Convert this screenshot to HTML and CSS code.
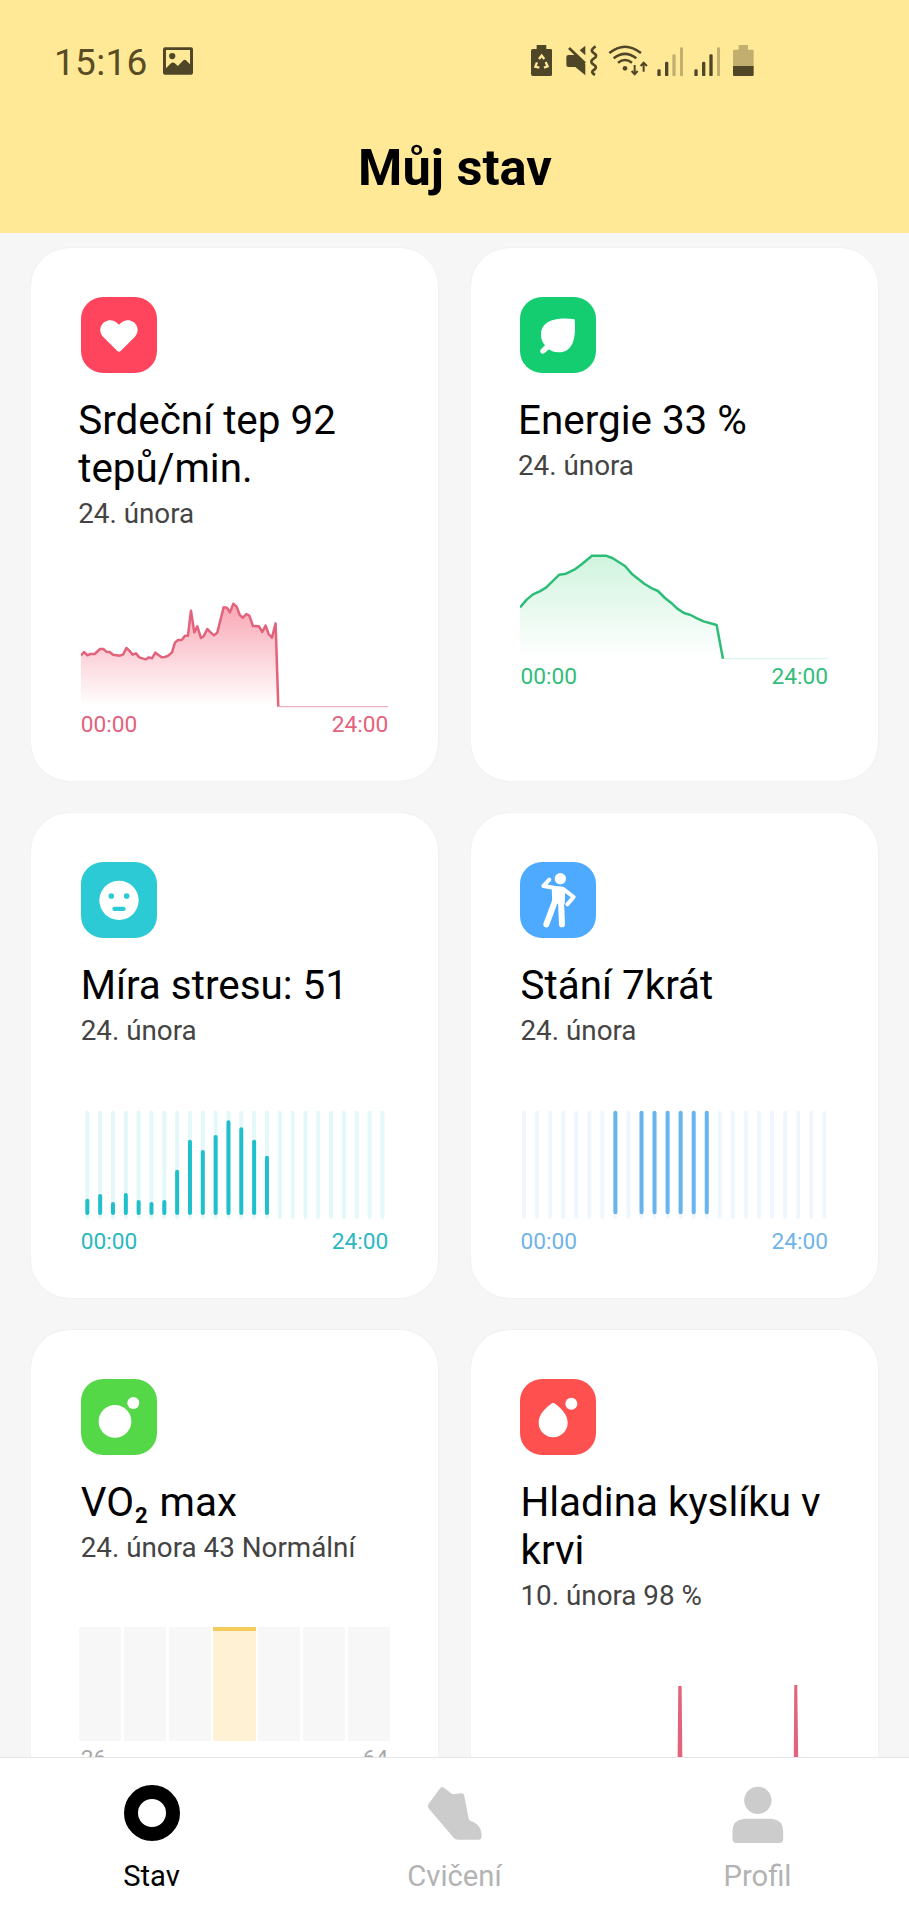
FILE: index.html
```html
<!DOCTYPE html>
<html lang="cs">
<head>
<meta charset="utf-8">
<title>Můj stav</title>
<link rel="stylesheet" href="styles.css">
</head>
<body>
<div class="app">
  <header class="header">
    <div class="status">
      <span class="clock">15:16</span>
      <svg class="st-image" viewBox="488 141 91 84"><path fill-rule="evenodd" d="M494 141h79q6 0 6 6v72q0 6-6 6h-79q-6 0-6-6v-72q0-6 6-6zM497 150v55l15-15q6-5 12 0l9 8 17-17q4-4 8 0l12 12v-43z"/><circle cx="516" cy="168" r="9.500"/></svg>
      <div class="status-right">
        <svg class="st-saver" viewBox="242 135 64 93"><path d="M259 135h29v12h12q6 0 6 6v69q0 6-6 6h-52q-6 0-6-6v-69q0-6 6-6h11z"/><g class="recycle"><path d="M266 177l8-10 8 10M286 186l6 13-11 4M267 203l-12-3 5-13"/></g></svg>
        <svg class="st-mute" viewBox="350 135 94 93"><path d="M357 165h21l30 27v34l-30-25h-21q-6 0-6-6v-24q0-6 6-6zM391 151l17-14v29z"/><path class="line" d="M359 144l48 46" stroke-width="8"/><path class="line" d="M439 139q-18 11-7 19 16 10 1 18-14 9 0 18 14 8-1 17-8 6 5 14" stroke-width="8"/></svg>
        <svg class="st-wifi" viewBox="476 135 121 93"><path class="line" d="M480 159q47-38 95 0M493 175q34-27 68 0M506 188q21-16 42 0" stroke-width="7.500"/><circle cx="527" cy="205" r="7"/><path class="line" d="M556 195v27M547 213l9 10 9-10M583 215v-26M574 198l9-10 10 10" stroke-width="6"/></svg>
        <svg class="st-signal" viewBox="620 140 80 88"><g><rect x="621" y="207" width="10" height="21" rx="4"/><rect x="644" y="184" width="10" height="44" rx="4"/><rect class="dim" x="666" y="162" width="10" height="66" rx="4"/><rect class="dim" x="689" y="141" width="10" height="87" rx="4"/></g></svg>
        <svg class="st-signal second" viewBox="620 140 80 88"><rect x="621" y="207" width="10" height="21" rx="4"/><rect x="644" y="184" width="10" height="44" rx="4"/><rect x="666" y="162" width="10" height="66" rx="4"/><rect class="dim" x="689" y="141" width="10" height="87" rx="4"/></svg>
        <svg class="st-battery" viewBox="849 135 62 93"><path class="dim" d="M866 135h28v14h13q4 0 4 4v45h-62v-45q0-4 4-4h13z"/><path d="M849 198h62v26q0 4-4 4h-54q-4 0-4-4z"/></svg>
      </div>
    </div>
    <h1 class="page-title">Můj stav</h1>
  </header>

  <main class="cards">
    <article class="card shifted">
      <svg class="icon" viewBox="182 171 228 228"><rect class="bg-red" x="182" y="171" width="228" height="228" rx="66"/><path fill="#fff" d="M291 333L248 290C222 259 265 219 296 254C327 219 370 259 344 290L301 333Q296 338 291 333z"/></svg>
      <h2 class="card-title">Srdeční tep 92 tepů/min.</h2>
      <p class="card-sub">24. února</p>
      <svg class="chart" viewBox="183 189 923 351">
        <defs><linearGradient id="g-heart" x1="0" y1="220" x2="0" y2="530" gradientUnits="userSpaceOnUse"><stop offset="0" stop-color="#f9a6b4"/><stop offset="1" stop-color="#fff"/></linearGradient></defs>
        <path fill="url(#g-heart)" d="M183 376L192 366L202 376L211 372L224 372L240 357L250 357L259 365L269 366L279 374L300 377L310 373L319 354L329 363L338 374L348 370L358 382L377 388L387 382L396 385L406 368L425 382L435 381L445 377L456 367L465 338L474 330L485 330L495 317L504 317L513 242L523 307L532 289L543 324L552 317L562 297L572 307L582 316L592 308L611 232L621 233L630 247L640 221L650 230L660 256L669 263L679 252L688 257L699 288L717 289L727 306L737 287L746 312L756 323L767 280L775 530L183 530z"/>
        <path class="baseline heart-base" d="M778 530H1106"/>
        <path class="series heart-line" d="M183 376L192 366L202 376L211 372L224 372L240 357L250 357L259 365L269 366L279 374L300 377L310 373L319 354L329 363L338 374L348 370L358 382L377 388L387 382L396 385L406 368L425 382L435 381L445 377L456 367L465 338L474 330L485 330L495 317L504 317L513 242L523 307L532 289L543 324L552 317L562 297L572 307L582 316L592 308L611 232L621 233L630 247L640 221L650 230L660 256L669 263L679 252L688 257L699 288L717 289L727 306L737 287L746 312L756 323L767 280L775 530"/>
      </svg>
      <div class="axis red"><span>00:00</span><span>24:00</span></div>
    </article>

    <article class="card shifted">
      <svg class="icon" viewBox="180 171 228 228"><rect class="bg-green" x="180" y="171" width="228" height="228" rx="66"/><path fill="#fff" d="M341 237q3 0 3 3c5 56-6 97-48 97-13 0-22-4-29-9l-13 11c-8 7-18-4-11-11l12-12c-8-10-12-20-12-32 0-42 44-53 98-47z"/></svg>
      <h2 class="card-title">Energie 33 %</h2>
      <p class="card-sub">24. února</p>
      <svg class="chart" viewBox="180 45 923 351">
        <defs><linearGradient id="g-energy" x1="0" y1="76" x2="0" y2="386" gradientUnits="userSpaceOnUse"><stop offset="0" stop-color="#d0f4de"/><stop offset="1" stop-color="#fff"/></linearGradient></defs>
        <path fill="url(#g-energy)" d="M180 232L200 209L219 193L239 184L258 173L298 134L318 131L343 119L366 102L396 77L437 77L457 84L495 108L515 131L554 162L576 175L594 183L615 204L633 218L652 236L672 249L692 255L711 265L731 274L770 285L789 386H180z"/>
        <path class="baseline energy-base" d="M791 386H1103"/>
        <path class="series energy-line" d="M180 232L200 209L219 193L239 184L258 173L298 134L318 131L343 119L366 102L396 77L437 77L457 84L495 108L515 131L554 162L576 175L594 183L615 204L633 218L652 236L672 249L692 255L711 265L731 274L770 285L789 386"/>
      </svg>
      <div class="axis green"><span>00:00</span><span>24:00</span></div>
    </article>

    <article class="card">
      <svg class="icon" viewBox="182 186 228 228"><rect class="bg-teal" x="182" y="186" width="228" height="228" rx="66"/><circle cx="296" cy="301" r="59" fill="#fff"/><g class="bg-teal"><circle cx="273" cy="288" r="8.500"/><circle cx="319" cy="288" r="8.500"/><rect x="276" y="320" width="40" height="13" rx="6.500"/></g></svg>
      <h2 class="card-title">Míra stresu: 51</h2>
      <p class="card-sub">24. února</p>
      <svg class="chart" viewBox="183 930 923 351">
        <path class="bars stress-track" d="M202 938V1251M240.500 938V1251M279 938V1251M317.500 938V1251M356 938V1251M394.500 938V1251M433 938V1251M471.500 938V1251M510 938V1251M548.500 938V1251M587 938V1251M625.500 938V1251M664 938V1251M702.500 938V1251M741 938V1251M779.500 938V1251M818 938V1251M856.500 938V1251M895 938V1251M933.500 938V1251M972 938V1251M1010.500 938V1251M1049 938V1251M1087.500 938V1251"/>
        <path class="bars stress-bar" d="M202 1202V1239M240.500 1188V1239M279 1212V1239M317.500 1185V1239M356 1206V1239M394.500 1212V1239M433 1206V1239M471.500 1115V1239M510 1025V1239M548.500 1056V1239M587 1011V1239M625.500 967V1239M664 988V1239M702.500 1025V1239M741 1073V1239"/>
      </svg>
      <div class="axis teal"><span>00:00</span><span>24:00</span></div>
    </article>

    <article class="card">
      <svg class="icon" viewBox="180 186 228 228"><rect class="bg-blue" x="180" y="186" width="228" height="228" rx="66"/><circle cx="301" cy="236" r="17" fill="#fff"/><path fill="#fff" d="M275 259L306 262L316 267L314 312L292 311L277 312z"/><g class="limbs"><path d="M268 239L250 258L282 263L308 266L341 291L322 313" stroke-width="12"/><path d="M284 306L259 373M303 303L306 373" stroke-width="18"/></g></svg>
      <h2 class="card-title">Stání 7krát</h2>
      <p class="card-sub">24. února</p>
      <svg class="chart" viewBox="180 930 923 351">
        <path class="bars stand-track" d="M192 938V1251M231.200 938V1251M270.400 938V1251M309.500 938V1251M348.700 938V1251M387.900 938V1251M427 938V1251M466.200 938V1251M505.400 938V1251M544.600 938V1251M583.700 938V1251M622.900 938V1251M662 938V1251M701.200 938V1251M740.400 938V1251M779.600 938V1251M818.700 938V1251M857.900 938V1251M897 938V1251M936.200 938V1251M975.400 938V1251M1014.600 938V1251M1053.700 938V1251M1093 938V1251"/>
        <path class="bars stand-bar" d="M466.200 938V1237M544.600 938V1237M583.700 938V1237M622.900 938V1237M662 938V1237M701.200 938V1237M740.400 938V1237"/>
      </svg>
      <div class="axis blue"><span>00:00</span><span>24:00</span></div>
    </article>

    <article class="card">
      <svg class="icon" viewBox="182 177 228 228"><rect class="bg-lime" x="182" y="177" width="228" height="228" rx="66"/><circle cx="284" cy="304" r="49" fill="#fff"/><circle cx="339" cy="249" r="18" fill="#fff"/></svg>
      <h2 class="card-title">VO<span class="two">2</span> max</h2>
      <p class="card-sub">24. února 43 Normální</p>
      <div class="zones"><i></i><i></i><i></i><i class="active"></i><i></i><i></i><i></i></div>
      <div class="axis gray"><span>26</span><span>64</span></div>
    </article>

    <article class="card">
      <svg class="icon" viewBox="180 177 228 228"><rect class="bg-coral" x="180" y="177" width="228" height="228" rx="66"/><path fill="#fff" d="M276 250q3-3 7 0c19 13 40 34 40 58a43 43 0 0 1-87 0c0-24 19-43 40-58z"/><circle cx="334" cy="251" r="18" fill="#fff"/></svg>
      <h2 class="card-title">Hladina kyslíku v krvi</h2>
      <p class="card-sub">10. února 98 %</p>
      <svg class="chart" viewBox="180 1065 923 351"><path fill="#e3627c" d="M655 1098h10l3 318h-16zM1003 1095h9l4 321h-15z"/></svg>
    </article>
  </main>

  <nav class="tabs">
    <a class="tab active"><svg class="tab-icon" viewBox="0 0 60 60"><circle cx="30" cy="30" r="21" fill="none" stroke="#000" stroke-width="14"/></svg><span>Stav</span></a>
    <a class="tab"><svg class="tab-icon" viewBox="73.500 54 180 180"><path d="M120 68q5-4 10 0l22 17q4 4 10 2l21-2q7 0 8 6l13 67q1 7 7 10c18 5 31 21 32 37v10q0 9-9 9h-62q-7 0-12-5L84 130q-5-6 0-13z"/></svg><span>Cvičení</span></a>
    <a class="tab"><svg class="tab-icon" viewBox="982.500 54 180 180"><circle cx="1072" cy="106" r="41"/><path d="M1030 161h84q34 5 34 36v24q0 13-13 13h-126q-13 0-13-13v-24q0-31 34-36z"/></svg><span>Profil</span></a>
  </nav>
</div>
</body>
</html>
```

FILE: styles.css
```css
* { box-sizing: border-box; }
body { margin: 0; background: #f6f6f6; font-family: Roboto, "Noto Sans", sans-serif; color: #000; }
.app { display: flex; flex-direction: column; width: 909px; height: 1920px; overflow: hidden; }
.app svg { display: block; flex: none; }

/* header */
.header { flex: none; height: 233px; background: #ffe997; }
.status { display: flex; align-items: flex-start; height: 130px; padding: 45px 0 0 54px; color: #574c24; fill: #4f4627; }
.clock { width: 109px; margin-top: -4px; font-size: 37px; line-height: 44px; letter-spacing: 0.3px; }
.st-image { width: 30px; height: 28px; margin-top: 2px; }
.status-right { display: flex; align-items: flex-end; height: 31px; margin-left: 337.500px; }
.st-saver { width: 21.300px; height: 31px; }
.st-mute { width: 31.300px; height: 31px; margin-left: 14.500px; }
.st-wifi { width: 40.300px; height: 31px; margin-left: 10.700px; }
.st-signal { width: 26.700px; height: 29.300px; margin-left: 8px; }
.st-signal.second { margin-left: 10.500px; }
.st-battery { width: 20.700px; height: 31px; margin-left: 12.500px; }
.dim { opacity: 0.35; }
.line { fill: none; stroke: #4f4627; }
.recycle { fill: none; stroke: #ffe997; stroke-width: 7; }
.page-title { margin: 8px 0 0; padding-left: 1px; font-size: 50.600px; line-height: 60px; font-weight: 700; text-align: center; }

/* cards */
.cards { flex: 1; min-height: 0; overflow: hidden; display: grid; grid-template-columns: 407.300px 407.300px; grid-template-rows: 533px 485px 533px; gap: 32px 32.500px; padding: 14.700px 30.800px 0; }
.card { padding: 49.300px 49.900px 0 49.900px; background: #fff; border-radius: 38px; box-shadow: 0 0 2px rgba(0, 0, 0, 0.07); }
.icon { width: 76px; height: 76px; }
.card-title { margin: 23.600px -10px 0 0; font-size: 40.400px; line-height: 48px; font-weight: 400; }
.card-sub { margin: 4.800px -10px 0 0; font-size: 27.800px; line-height: 34px; color: #444; }
.shifted .card-title, .shifted .card-sub { margin-left: -2.500px; }
.two { font-size: 22px; line-height: 0; font-weight: 700; vertical-align: -7px; margin: 0 2px 0 1px; }
.chart { width: 307.600px; height: 117px; margin-top: 62px; }
.axis { display: flex; justify-content: space-between; padding-top: 1px; font-size: 22.700px; line-height: 28px; }

.bg-red { fill: #ff455d; }
.bg-green { fill: #14cd70; }
.bg-teal { fill: #2ccad5; }
.bg-blue { fill: #4eaaff; }
.bg-lime { fill: #54d848; }
.bg-coral { fill: #ff5050; }
.limbs { fill: none; stroke: #fff; stroke-linecap: round; stroke-linejoin: round; }

.series { fill: none; stroke-width: 7.500; stroke-linejoin: round; }
.heart-line { stroke: #e3627c; }
.energy-line { stroke: #2dbd78; }
.baseline { stroke-width: 4; }
.heart-base { stroke: #efafbb; }
.energy-base { stroke: #dcf3ea; }
.bars { stroke-width: 12; stroke-linecap: round; }
.stress-track { stroke: #e4f7f9; }
.stress-bar { stroke: #1fc0cc; }
.stand-track { stroke: #eff7fe; }
.stand-bar { stroke: #68b4ee; }

.red { color: #e3627c; }
.green { color: #32bd7b; }
.teal { color: #2ab8c0; }
.blue { color: #70b4e8; }
.gray { color: #a8a8a8; }

.zones { display: grid; grid-template-columns: repeat(7, 1fr); gap: 2.500px; width: 311px; height: 113.500px; margin: 62px 0 3.500px -1.700px; }
.zones i { background: #f7f7f7; }
.zones .active { background: #fff2d4; border-top: 4px solid #f4cc5c; }

/* bottom navigation */
.tabs { flex: none; display: grid; grid-template-columns: repeat(3, 1fr); height: 163px; background: #fff; border-top: 1px solid #e6e6e6; }
.tab { display: flex; flex-direction: column; align-items: center; padding-top: 25px; color: #b3b3b3; fill: #ccc; }
.tab.active { color: #000; }
.tab-icon { width: 60px; height: 60px; }
.tab span { margin-top: 16px; font-size: 29.200px; line-height: 34px; }
```
